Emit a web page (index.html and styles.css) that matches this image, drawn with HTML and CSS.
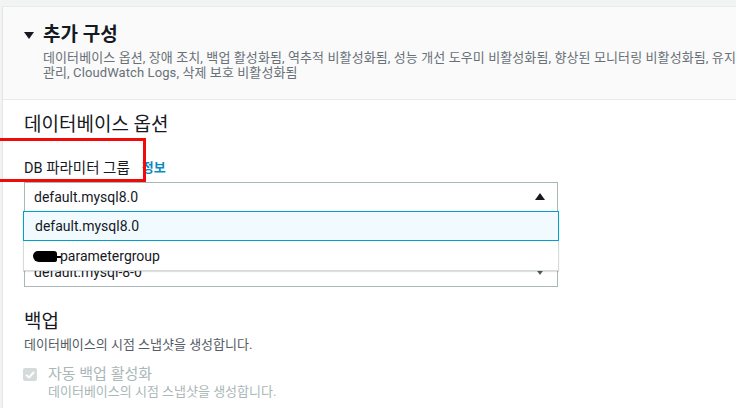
FILE: index.html
```html
<!DOCTYPE html>
<html lang="ko">
<head>
<meta charset="utf-8">
<title>추가 구성</title>
<link rel="stylesheet" href="styles.css">
</head>
<body>
<div class="page">
  <div class="panel">
    <div class="panel-header">
      <div class="title-row">
        <span class="caret"></span>
        <h2 class="title">추가 구성</h2>
      </div>
      <p class="summary">데이터베이스 옵션, 장애 조치, 백업 활성화됨, 역추적 비활성화됨, 성능 개선 도우미 비활성화됨, 향상된 모니터링 비활성화됨, 유지 관리, CloudWatch Logs, 삭제 보호 비활성화됨</p>
    </div>
    <div class="panel-body">
      <h3 class="section-title">데이터베이스 옵션</h3>
      <div class="field">
        <div class="label-row">
          <span class="label">DB 파라미터 그룹</span>
          <a class="info" href="#">정보</a>
          <span class="highlight"></span>
        </div>
        <div class="select open">
          <span class="select-text">default.mysql8.0</span>
          <span class="arrow-up"></span>
          <ul class="options">
            <li class="option selected">default.mysql8.0</li>
            <li class="option"><span class="redact"></span>parametergroup</li>
          </ul>
        </div>
        <div class="select second">
          <span class="select-text">default:mysql-8-0</span>
          <span class="arrow-down"></span>
        </div>
      </div>
      <h3 class="section-title backup">백업</h3>
      <p class="desc">데이터베이스의 시점 스냅샷을 생성합니다.</p>
      <div class="check-row">
        <span class="checkbox">
          <svg width="12" height="12" viewBox="0 0 12 12"><path d="M2.6 6.3 L5 8.6 L9.5 3.5" fill="none" stroke="#fff" stroke-width="1.9" stroke-linecap="round" stroke-linejoin="round"/></svg>
        </span>
        <div class="check-text">
          <div class="check-label">자동 백업 활성화</div>
          <div class="check-desc">데이터베이스의 시점 스냅샷을 생성합니다.</div>
        </div>
      </div>
    </div>
  </div>
</div>
</body>
</html>
```

FILE: styles.css
```css
* { box-sizing: border-box; }
html, body { margin: 0; padding: 0; }
body {
  background: #f2f3f3;
  font-family: Roboto, "Noto Sans CJK KR", sans-serif;
  color: #16191f;
  overflow: hidden;
  height: 408px;
}
.page {
  padding: 6px 0 0 2px;
}
.panel {
  background: #ffffff;
  border-left: 1px solid #e3e6e6;
  border-top: 1px solid #e9ebeb;
  min-height: 420px;
}
.panel-header {
  background: #fafafa;
  border-bottom: 1px solid #e9ebeb;
  height: 93px;
  padding: 16px 0 0 21px;
}
.title-row {
  display: flex;
  align-items: center;
  height: 24px;
}
.caret {
  width: 0;
  height: 0;
  border-left: 5px solid transparent;
  border-right: 5px solid transparent;
  border-top: 7px solid #16191f;
  margin-right: 9px;
  margin-top: 1px;
}
.title {
  margin: 0;
  font-size: 19px;
  font-weight: 700;
  line-height: 24px;
}
.summary {
  margin: 3px 0 0 19px;
  font-size: 13px;
  line-height: 15px;
  letter-spacing: 0.1px;
  word-break: keep-all;
  color: #687078;
}
.panel-body {
  padding: 13px 0 0 21px;
}
.section-title {
  margin: 0;
  font-size: 19px;
  font-weight: 400;
  line-height: 24px;
  color: #16191f;
}
.field {
  position: relative;
  margin-top: 16px;
  width: 534px;
}
.label-row {
  position: relative;
  height: 26px;
  margin-bottom: 3px;
  display: flex;
  align-items: center;
  font-size: 14.5px;
}
.label { color: #16191f; }
.info {
  margin-left: 12px;
  color: #0a8ac2;
  font-weight: 700;
  text-decoration: none;
  font-size: 13px;
}
.highlight {
  position: absolute;
  z-index: 3;
  left: -30px;
  top: -15px;
  width: 152px;
  height: 44px;
  border: 3px solid #f00a0a;
}
.select {
  position: relative;
  height: 30px;
  border: 1px solid #aab7b8;
  background: #fff;
  display: flex;
  align-items: center;
  padding-left: 9px;
  font-size: 14px;
  color: #16191f;
}
.arrow-up {
  position: absolute;
  right: 12px;
  top: 10px;
  width: 0; height: 0;
  border-left: 5.5px solid transparent;
  border-right: 5.5px solid transparent;
  border-bottom: 7px solid #16191f;
}
.arrow-down {
  position: absolute;
  right: 12px;
  top: 11px;
  width: 0; height: 0;
  border-left: 5px solid transparent;
  border-right: 5px solid transparent;
  border-top: 7px solid #545b64;
}
.select.second {
  margin-top: 45px;
  height: 30px;
  border-top: none;
}
.options {
  position: absolute;
  z-index: 2;
  left: -2px;
  top: 28px;
  width: 536px;
  margin: 0;
  padding: 0;
  list-style: none;
  background: #fff;
  border: 1px solid #d5dbdb;
  border-top: none;
  box-shadow: 0 1px 1px rgba(0,0,0,0.12);
}
.option {
  height: 29px;
  display: flex;
  align-items: center;
  padding-left: 10px;
  font-size: 14px;
  color: #16191f;
}
.option.selected {
  height: 30px;
  background: #f1faff;
  border: 1px solid #00a1c9;
  margin: 0 -1px;
  padding-left: 11px;
}
.redact {
  position: relative;
  display: inline-block;
  width: 24px;
  height: 11px;
  background: #000;
  border-radius: 5px 3px 2px 6px;
  margin-left: -1px;
  margin-right: 3px;
  margin-top: 1px;
}
.redact::after {
  content: "";
  position: absolute;
  right: -4px;
  top: 5px;
  width: 6px;
  height: 2px;
  background: #000;
}
.backup {
  margin-top: 23px;
}
.desc {
  margin: 3px 0 0 0;
  font-size: 13px;
  line-height: 16px;
  color: #545b64;
}
.check-row {
  display: flex;
  align-items: flex-start;
  margin-top: 11px;
  margin-left: -1px;
}
.checkbox {
  flex: none;
  width: 14px;
  height: 13px;
  background: #d5dbdb;
  border-radius: 2px;
  margin-top: 4px;
  margin-right: 11px;
  display: flex;
  align-items: center;
  justify-content: center;
}
.check-label {
  font-size: 15px;
  line-height: 20px;
  color: #aab7b8;
}
.check-desc {
  font-size: 13px;
  line-height: 16px;
  color: #aab7b8;
}
```
